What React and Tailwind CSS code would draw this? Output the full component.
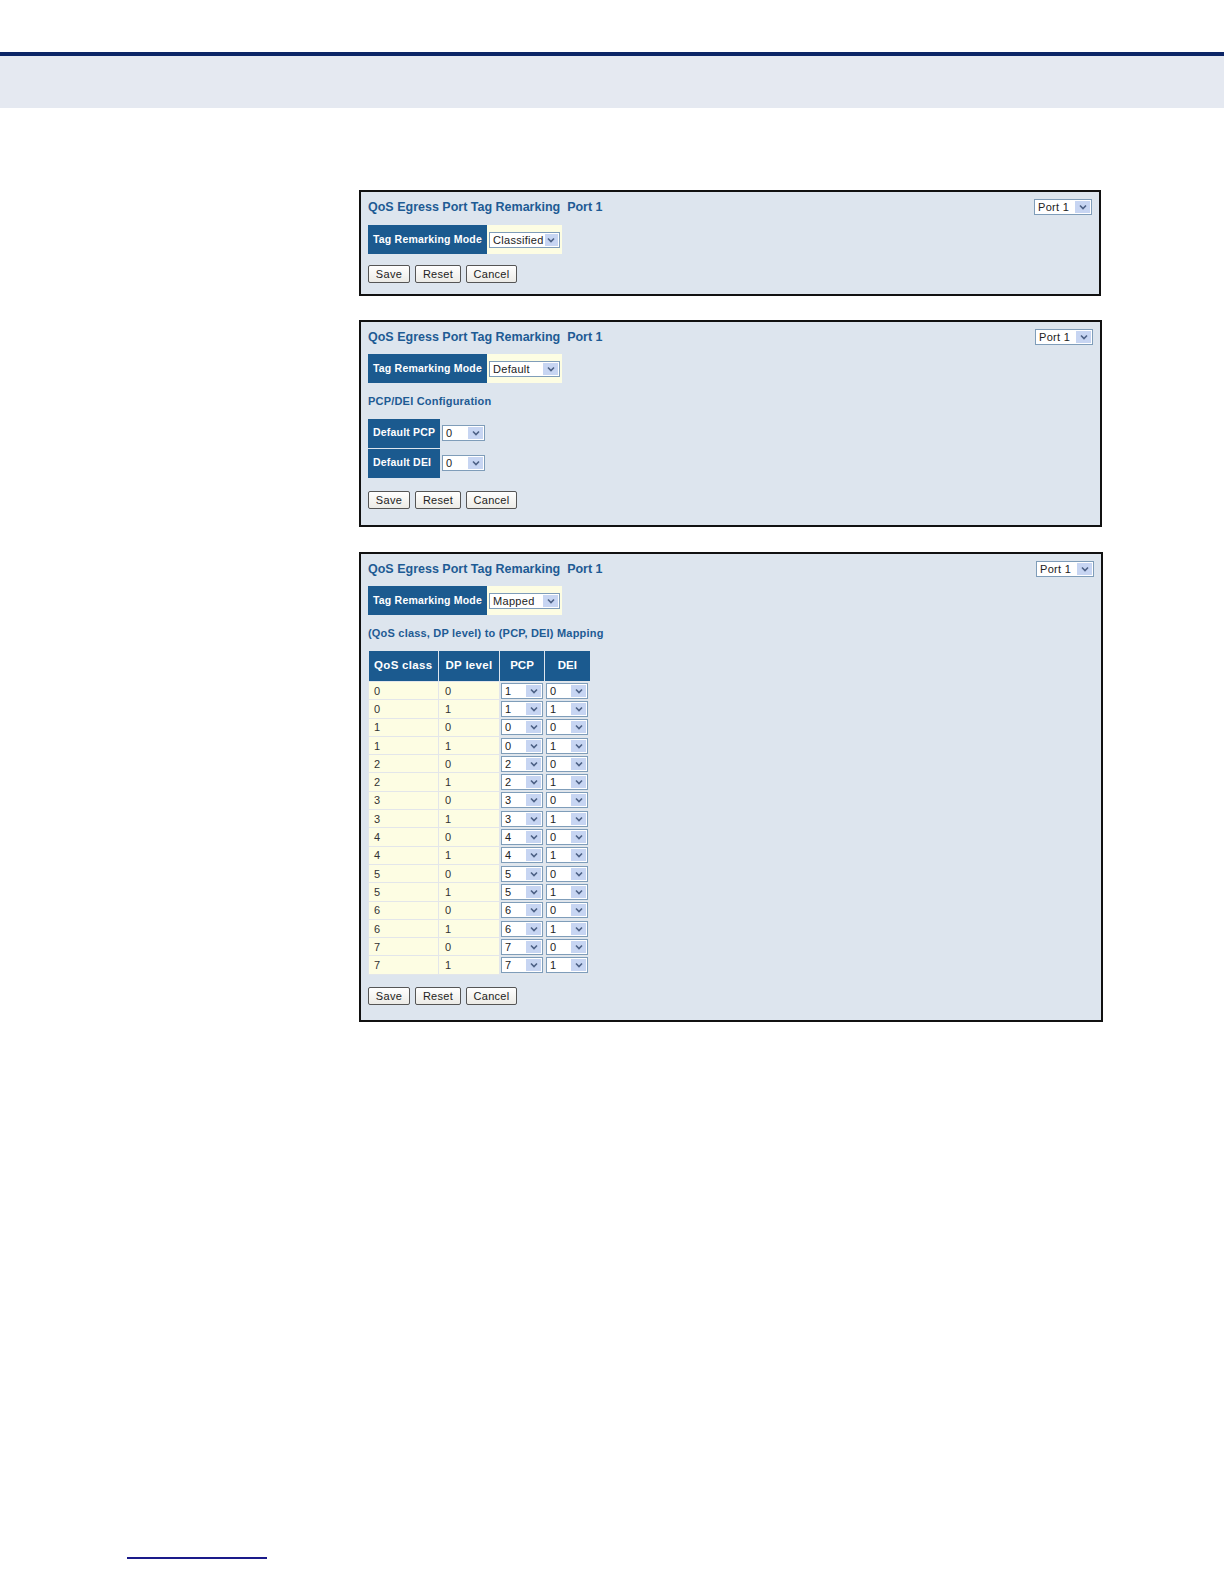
import React from 'react';

const font = { fontFamily: '"Liberation Sans", Arial, sans-serif' };

// fake IE-style dropdown: white box with a light blue arrow button
const Select = ({ value, w = 'w-[72px]' }) => (
    <div className={`${w} h-[16px] flex items-stretch border border-[#7f9db9] bg-white`}>
        <span className="flex-1 pl-[3px] text-[11px] leading-[14px] text-[#222] tracking-[0.3px]">{value}</span>
        <span className="w-[15px] m-[1px] bg-[#c7d5f2] flex items-center justify-center">
            <svg width="8" height="6" viewBox="0 0 8 6">
                <path d="M1 1.5 L4 4.5 L7 1.5" fill="none" stroke="#4d6185" strokeWidth="1.6" />
            </svg>
        </span>
    </div>
);

const Button = ({ children, w }) => (
    <button className={`${w} h-[18px] border border-[#555] rounded-[2px] bg-gradient-to-b from-white to-[#ecebe6] text-[11px] leading-[16px] text-[#222] tracking-[0.3px]`}>
        {children}
    </button>
);

const Buttons = () => (
    <div className="flex gap-[5px]">
        <Button w="w-[42px]">Save</Button>
        <Button w="w-[46px]">Reset</Button>
        <Button w="w-[51px]">Cancel</Button>
    </div>
);

const Title = ({ portW }) => (
    <div className="flex items-center justify-between h-[16px]">
        <span className="text-[12.5px] font-bold text-[#1e5b94]">QoS Egress Port Tag Remarking&nbsp; Port 1</span>
        <Select value="Port 1" w={portW} />
    </div>
);

const ModeRow = ({ value }) => (
    <div className="flex h-[29px]">
        <div className="w-[119px] bg-[#1b5a8f] text-white text-[10.5px] font-bold flex items-center pl-[5px] tracking-[0.2px]">Tag Remarking Mode</div>
        <div className="bg-[#fdfde3] flex items-center px-[2px]">
            <Select value={value} w="w-[71px]" />
        </div>
    </div>
);

const Panel = ({ w, children }) => (
    <div className={`${w} ml-[359px] border-2 border-[#111] bg-[#dde5ee] px-[7px] pt-[7px] flex flex-col items-start`}>
        {children}
    </div>
);

const mapping = [
    [0, 0, 1, 0], [0, 1, 1, 1], [1, 0, 0, 0], [1, 1, 0, 1],
    [2, 0, 2, 0], [2, 1, 2, 1], [3, 0, 3, 0], [3, 1, 3, 1],
    [4, 0, 4, 0], [4, 1, 4, 1], [5, 0, 5, 0], [5, 1, 5, 1],
    [6, 0, 6, 0], [6, 1, 6, 1], [7, 0, 7, 0], [7, 1, 7, 1],
];

const App = () => {
    return (
        <div className="w-[1224px] h-[1584px] bg-white relative" style={font}>
            <div className="h-[52px]" />
            <div className="h-[4px] bg-[#0c2566]" />
            <div className="h-[52px] bg-[#e5e9f1]" />

            <div className="pt-[82px] flex flex-col">
                {/* Classified */}
                <Panel w="w-[742px] h-[106px]">
                    <div className="self-stretch"><Title portW="w-[58px]" /></div>
                    <div className="mt-[10px]"><ModeRow value="Classified" /></div>
                    <div className="mt-[11px]"><Buttons /></div>
                </Panel>

                {/* Default */}
                <div className="mt-[24px]">
                    <Panel w="w-[743px] h-[207px]">
                        <div className="self-stretch"><Title portW="w-[58px]" /></div>
                        <div className="mt-[9px]"><ModeRow value="Default" /></div>
                        <div className="mt-[10px] text-[11px] font-bold text-[#1e5b94] tracking-[0.2px]">PCP/DEI Configuration</div>
                        <div className="mt-[9px] flex flex-col gap-[1px]">
                            {['Default PCP', 'Default DEI'].map((l) => (
                                <div key={l} className="flex h-[29px]">
                                    <div className="w-[72px] bg-[#1b5a8f] text-white text-[10.5px] font-bold flex items-center pl-[5px] tracking-[0.2px]">{l}</div>
                                    <div className="flex items-center px-[2px]">
                                        <Select value="0" w="w-[43px]" />
                                    </div>
                                </div>
                            ))}
                        </div>
                        <div className="mt-[13px]"><Buttons /></div>
                    </Panel>
                </div>

                {/* Mapped */}
                <div className="mt-[25px]">
                    <Panel w="w-[744px] h-[470px]">
                        <div className="self-stretch"><Title portW="w-[58px]" /></div>
                        <div className="mt-[9px]"><ModeRow value="Mapped" /></div>
                        <div className="mt-[10px] text-[11px] font-bold text-[#1e5b94] tracking-[0.2px]">(QoS class, DP level) to (PCP, DEI) Mapping</div>
                        <table className="mt-[9px] w-[221px] table-fixed border-collapse text-[11px]">
                            <thead>
                                <tr className="h-[31px] bg-[#1b5a8f] text-white">
                                    <th className="w-[70px] border-r border-[#dde5ee] font-bold text-[11.5px] tracking-[0.3px]">QoS class</th>
                                    <th className="w-[61px] border-r border-[#dde5ee] font-bold text-[11.5px] tracking-[0.3px]">DP level</th>
                                    <th className="w-[45px] border-r border-[#dde5ee] font-bold text-[11.5px]">PCP</th>
                                    <th className="w-[45px] font-bold text-[11.5px]">DEI</th>
                                </tr>
                            </thead>
                            <tbody>
                                {mapping.map(([q, d, p, e], i) => (
                                    <tr key={i} className="h-[18.3px]">
                                        <td className="bg-[#fdfde3] border border-[#e3e6ea] pl-[5px] leading-[16px] text-[#333]">{q}</td>
                                        <td className="bg-[#fdfde3] border border-[#e3e6ea] pl-[6px] leading-[16px] text-[#333]">{d}</td>
                                        <td className="border border-[#e3e6ea] px-[1px]"><Select value={p} w="w-[42px]" /></td>
                                        <td className="border border-[#e3e6ea] px-[1px]"><Select value={e} w="w-[42px]" /></td>
                                    </tr>
                                ))}
                            </tbody>
                        </table>
                        <div className="mt-[12px]"><Buttons /></div>
                    </Panel>
                </div>
            </div>

            <div className="absolute left-[127px] top-[1557px] w-[140px] h-[2px] bg-[#1a1a8a]" />
        </div>
    );
};

export default App;
